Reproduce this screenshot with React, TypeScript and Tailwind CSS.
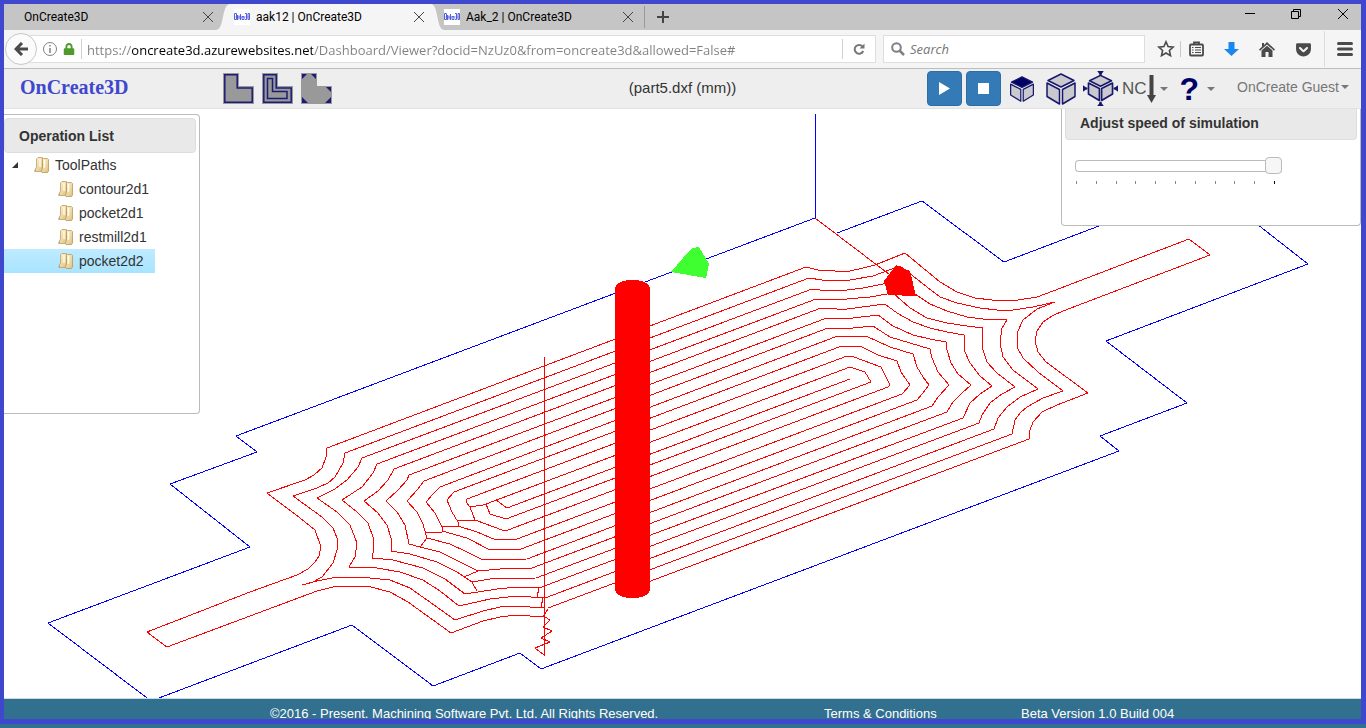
import type { ReactNode } from "react";
import { FaGetPocket, FaLock } from "react-icons/fa";

const operations = ["contour2d1", "pocket2d1", "restmill2d1", "pocket2d2"];

const stock =
  "815,218 236,436 257,452 170,484 250,547 48,623 151,701 352,625 433,686 520,653 541,669 1119,451 1100,436 1187,403 1106,341 1308,264 1207,185 1004,262 922,201 837,233";

// One entry per pass of the pocket, from the wall towards the centre.
const passes = [
  "632,588 1029,439 1030,430 1033,422 1042,412 1057,405 1088,393 1046,362 1038,352 1035,341 1037,331 1043,322 1052,316 1063,311 1210,255 1189,239 1053,291 1037,297 1018,300 992,300 975,298 957,292 940,282 905,253 875,265 863,268 850,271 835,271 818,270 806,267 327,448 326,457 322,468 314,475 305,480 267,493 300,518 315,530 321,547 319,556 315,562 308,569 297,575 250,592 147,632 167,647 250,616 317,591 333,587 350,586 367,586 390,592 408,602 451,633 483,621 500,617 517,615 530,616 544,617",
  "548,608 1012,434 1015,420 1020,413 1027,407 1043,398 1063,391 1038,372 1023,358 1017,347 1017,333 1023,320 1037,309 1055,302 1033,307 1013,310 997,310 980,308 957,303 940,297 927,287 913,276 900,266 873,276 850,280 822,280 809,278 345,453 343,463 335,477 328,483 317,488 293,496 322,517 333,528 337,538 338,547 333,563 322,577 313,582 302,585 317,581 337,577 360,577 390,580 410,588 427,600 455,620 483,611 500,607 517,606 530,607 544,608",
  "545,598 994,429 998,418 1007,407 1020,397 1038,389 1013,370 1003,357 1000,343 1002,328 1007,320 983,319 967,317 947,311 930,304 915,294 898,280 883,284 863,288 847,290 820,290 812,289 362,458 358,467 347,480 335,489 317,498 337,512 350,525 357,543 355,557 349,567 377,568 400,572 423,580 440,591 459,606 490,599 517,596 545,598",
  "539,588 979,423 982,415 990,403 1002,394 1015,387 997,373 987,362 983,350 982,337 983,328 967,326 947,323 927,318 910,308 893,293 870,297 847,299 816,299 377,464 373,473 362,487 342,500 357,512 368,523 373,537 374,548 372,558 393,560 423,568 445,579 465,594 497,589 517,587 539,588",
  "536,578 963,418 970,403 980,394 992,386 980,376 970,363 965,352 964,335 947,332 930,328 913,322 897,313 885,304 847,309 837,309 821,308 394,469 388,480 378,491 364,501 378,513 387,525 391,538 391,551 410,554 437,562 457,572 472,582 490,579 536,578",
  "532,568 947,412 953,402 962,393 971,385 958,374 951,363 947,350 946,342 930,339 913,335 893,326 878,315 853,318 824,319 409,475 407,480 398,490 386,501 397,512 405,525 409,544 420,547 440,552 460,562 478,571 500,569 532,568",
  "527,559 932,406 938,397 949,385 938,372 932,358 930,349 910,343 890,337 873,326 853,328 828,328 424,481 418,489 407,501 417,512 423,524 427,538 450,544 467,552 483,560 527,559",
  "521,549 917,400 922,394 929,385 923,377 917,367 913,354 890,347 866,336 835,337 440,487 433,494 426,502 435,513 442,527 442,531 467,538 490,550 521,549",
  "517,539 902,394 910,385 901,372 897,361 878,355 860,346 839,347 454,492 447,500 452,512 458,522 458,526 477,532 496,540 517,539",
  "508,530 888,387 890,385 881,367 854,357 847,356 467,499 466,502 470,507 475,520 502,530 508,530",
  "506,519 871,382 865,372 850,367 486,504 490,514 506,519",
  "850,379 507,508 496,500",
];

// Short moves between neighbouring passes, then the ramp down to the start point.
const links = [
  "470,507 483,505 486,504",
  "458,521 475,520",
  "442,527 458,526",
  "426,533 442,532",
  "427,538 420,547",
  "464,577 478,571",
  "472,582 477,591",
  "539,588 537,597",
  "543,598 541,607",
  "548,609 543,617",
  "545,617 550,620 543,627 552,631 541,638 550,642 535,648 544,655 544,357",
];

const cubes = {
  fill: "#c9c9cf",
  stroke: "#17176b",
};

function Viewport() {
  return (
    <svg
      className="absolute inset-0 h-full w-full"
      viewBox="4 109 1357 589"
      preserveAspectRatio="xMinYMin slice"
      shapeRendering="crispEdges"
      fill="none"
      aria-label="Toolpath view"
    >
      <polyline points={stock} stroke="#0000ff" />
      <path d="M815 114V218" stroke="#0000ff" />
      <path d="M815 218L890 275" stroke="#ff0000" />
      {passes.map((points) => (
        <polyline key={points} points={points} stroke="#ff0000" />
      ))}
      {links.map((points) => (
        <polyline key={points} points={points} stroke="#ff0000" />
      ))}
      <path d="M671 272L689 251L692 248L699 247L709 264L706 278Z" fill="#40ff30" />
      <path d="M896 265L910 271L916 296L888 295L884 281Z" fill="#ff0000" />
      <path d="M615 288C617 277 648 277 650 288V590C648 601 617 601 615 590Z" fill="#ff0000" />
    </svg>
  );
}

function Favicon() {
  return (
    <svg width="16" height="16" viewBox="0 0 16 16" className="shrink-0" aria-hidden="true">
      <rect width="16" height="16" fill="#fff" />
      <g fill="none" stroke="#5560d8" strokeWidth="1">
        <path d="M0.500 4.500h2v6h-2zM3.500 6v5M5 6.500v4M6.500 5v6M8 7.500h2v3H8zM11 4.500h1.500v6H11M14 4.500h1.500v6H14z" />
        <path d="M0 8h16" opacity="0.500" />
      </g>
    </svg>
  );
}

function CloseIcon({ size = 12 }: { size?: number }) {
  return (
    <svg width={size} height={size} viewBox="0 0 12 12" stroke="currentColor" aria-hidden="true">
      <path d="M1 1L11 11M11 1L1 11" />
    </svg>
  );
}

function Caret() {
  return (
    <svg width="8" height="4" viewBox="0 0 8 4" fill="#777" aria-hidden="true">
      <path d="M0 0H8L4 4Z" />
    </svg>
  );
}

function TabStrip() {
  return (
    <div className="flex h-[26px] bg-[#c5c5c5] font-['Roboto',sans-serif] text-xs text-black">
      <div className="flex w-[212px] items-center justify-between pr-0.5 pl-5">
        <span>OnCreate3D</span>
        <button aria-label="Close OnCreate3D" className="text-[#444]">
          <CloseIcon />
        </button>
      </div>
      <svg width="14" height="26" viewBox="0 0 14 26" fill="#f5f5f5" aria-hidden="true">
        <path d="M0 26C9 25 5 1 14 0V26Z" />
      </svg>
      <div className="flex w-[201px] items-center bg-[#f5f5f5] pr-1.5 pl-1">
        <Favicon />
        <span className="ml-1.5 flex-1">aak12 | OnCreate3D</span>
        <button aria-label="Close aak12" className="text-[#444]">
          <CloseIcon />
        </button>
      </div>
      <svg width="13" height="26" viewBox="0 0 13 26" fill="#f5f5f5" aria-hidden="true">
        <path d="M0 0C8 1 5 25 13 26H0Z" />
      </svg>
      <div className="flex w-[190px] items-center">
        <Favicon />
        <span className="ml-1.5 flex-1">Aak_2 | OnCreate3D</span>
        <button aria-label="Close Aak_2" className="text-[#444]">
          <CloseIcon />
        </button>
      </div>
      <div className="my-0.5 ml-2.5 w-px bg-[#999]" />
      <button aria-label="New tab" className="ml-3 text-[#444]">
        <svg width="12" height="12" viewBox="0 0 12 12" stroke="currentColor" strokeWidth="2" aria-hidden="true">
          <path d="M6 0V12M0 6H12" />
        </svg>
      </button>
      <div className="ml-auto flex items-start gap-9 pt-1 pr-3">
        <button aria-label="Minimize">
          <svg width="10" height="12" viewBox="0 0 10 12" stroke="#000" aria-hidden="true">
            <path d="M0 5.500H10" />
          </svg>
        </button>
        <button aria-label="Restore">
          <svg width="10" height="12" viewBox="0 0 10 12" fill="none" stroke="#000" aria-hidden="true">
            <path d="M0.500 3.500H7.500V10.500H0.500ZM2.500 3.500V1.500H9.500V8.500H7.500" />
          </svg>
        </button>
        <button aria-label="Close window">
          <CloseIcon />
        </button>
      </div>
    </div>
  );
}

function AddressBar() {
  return (
    <div className="flex h-[39px] items-center border-b border-[#bdbdbd] bg-[#f5f5f5] pr-2 pl-px font-['Open_Sans',sans-serif] text-[#4a4a4a]">
      <button
        aria-label="Back"
        className="z-10 flex size-8 shrink-0 items-center justify-center rounded-full border border-[#c8c8c8] bg-[#fbfbfb]"
      >
        <svg width="15" height="14" viewBox="0 0 15 14" fill="none" stroke="currentColor" strokeWidth="3" aria-hidden="true">
          <path d="M8 1L2 7L8 13M2.500 7H14" />
        </svg>
      </button>
      <div className="-ml-4 flex h-7 min-w-0 flex-1 items-center border border-[#dedede] bg-white pl-[21px]">
        <svg width="14" height="14" viewBox="0 0 14 14" fill="none" stroke="#808080" className="shrink-0" aria-hidden="true">
          <circle cx="7" cy="7" r="6.500" />
          <path d="M7 6V11M7 3V4.500" strokeWidth="1.500" />
        </svg>
        <FaLock size={12} className="ml-1.5 shrink-0 text-[#4e9a2a]" />
        <div className="ml-1.5 h-5 w-px bg-[#d0d0d0]" />
        <input
          aria-label="Address"
          defaultValue="https://oncreate3d.azurewebsites.net/Dashboard/Viewer?docid=NzUz0&from=oncreate3d&allowed=False#"
          className="ml-[5px] h-full min-w-0 flex-1 bg-[linear-gradient(90deg,#808080_45px,#000_45px,#000_226px,#808080_226px)] bg-clip-text pt-0.5 text-[13px] text-transparent outline-none"
        />
        <div className="h-5 w-px bg-[#d0d0d0]" />
        <button aria-label="Reload" className="flex w-8 justify-center text-[#777]">
          <svg width="12" height="12" viewBox="0 0 12 12" aria-hidden="true">
            <path d="M9.500 3.500A4.400 4.400 0 1 0 10.200 8" fill="none" stroke="currentColor" strokeWidth="2" />
            <path d="M11.500 0.500V5.500H6.500Z" fill="currentColor" />
          </svg>
        </button>
      </div>
      <div className="ml-[7px] flex h-7 w-[262px] items-center border border-[#dedede] bg-white pl-[7px]">
        <svg width="14" height="14" viewBox="0 0 14 14" fill="none" stroke="#808080" strokeWidth="2" className="shrink-0" aria-hidden="true">
          <circle cx="5.500" cy="5.500" r="4.300" />
          <path d="M8.500 8.500L13 13" strokeWidth="2.500" />
        </svg>
        <input
          aria-label="Search"
          placeholder="Search"
          className="ml-[5px] w-full pt-0.5 text-[13px] outline-none placeholder:text-[#757575] placeholder:italic"
        />
      </div>
      <button aria-label="Bookmark this page" className="ml-3">
        <svg width="18" height="18" viewBox="0 0 18 18" fill="none" stroke="currentColor" strokeWidth="1.600" aria-hidden="true">
          <path d="M9 1.800L11.100 6.600L16.200 7.100L12.400 10.500L13.500 15.700L9 13L4.500 15.700L5.600 10.500L1.800 7.100L6.900 6.600Z" />
        </svg>
      </button>
      <div className="ml-[5px] h-4 w-px bg-[#c8c8c8]" />
      <button aria-label="Bookmarks" className="ml-2">
        <svg width="15" height="16" viewBox="0 0 15 16" fill="none" stroke="currentColor" aria-hidden="true">
          <path d="M1 4.500Q1 3.500 2 3.500H13Q14 3.500 14 4.500V13.500Q14 14.500 13 14.500H2Q1 14.500 1 13.500Z" strokeWidth="1.800" />
          <path d="M5 3.500V1.500H10V3.500" strokeWidth="1.800" />
          <path d="M3 6.500H4.500M6 6.500H12M3 9H4.500M6 9H12M3 11.500H4.500M6 11.500H12" strokeWidth="1.200" />
        </svg>
      </button>
      <button aria-label="Downloads" className="ml-5 text-[#1a86f0]">
        <svg width="15" height="14" viewBox="0 0 15 14" fill="currentColor" aria-hidden="true">
          <path d="M4.500 0H10.500V7H15L7.500 14L0 7H4.500Z" />
        </svg>
      </button>
      <button aria-label="Home" className="ml-5">
        <svg width="16" height="15" viewBox="0 0 16 15" fill="currentColor" aria-hidden="true">
          <path d="M8 0L16 7.500L15 8.700L8 2.400L1 8.700L0 7.500L3 4.700V1H5V3Z" />
          <path d="M8 3.700L13.500 8.500V15H9.500V10H6.500V15H2.500V8.500Z" />
        </svg>
      </button>
      <button aria-label="Pocket" className="ml-5">
        <FaGetPocket size={17} />
      </button>
      <div className="ml-3 h-9 w-px bg-[#dcdcdc]" />
      <button aria-label="Menu" className="ml-3">
        <svg width="16" height="14" viewBox="0 0 16 14" stroke="currentColor" strokeWidth="3" strokeLinecap="round" aria-hidden="true">
          <path d="M1.500 1.500H14.500M1.500 7H14.500M1.500 12.500H14.500" />
        </svg>
      </button>
    </div>
  );
}

function PartIcon({ children }: { children?: ReactNode }) {
  return (
    <svg width="31" height="31" viewBox="0 0 31 31" fill="none" stroke="#1c1c78" strokeWidth="1.500" aria-hidden="true">
      <path d="M0 0H16V13H31V31H0Z" fill="#999" stroke="none" />
      {children}
    </svg>
  );
}

function Cube({ size, top = cubes.fill, arrows = false }: { size: number; top?: string; arrows?: boolean }) {
  return (
    <svg width={size} height={size} viewBox="0 0 32 32" strokeLinejoin="round" strokeWidth="1.500" fill={cubes.fill} stroke={cubes.stroke} aria-hidden="true">
      {arrows ? (
        <>
          <path d="M16 4L26 9L16 14L6 9Z" />
          <path d="M5 11L15 16V27L5 21Z" />
          <path d="M27 11L17 16V27L27 21Z" />
          <path d="M16 0V4M16 28V32M0 16H4M28 16H32" strokeWidth="2" />
          <path d="M13 0H19L16 4ZM13 32H19L16 28ZM0 13V19L4 16ZM32 13V19L28 16Z" fill={cubes.stroke} stroke="none" />
        </>
      ) : (
        <>
          <path d="M16 1L29 7.500L16 14L3 7.500Z" fill={top} />
          <path d="M2 10L14.500 16.500V31L2 23.500Z" />
          <path d="M30 10L17.500 16.500V31L30 23.500Z" />
        </>
      )}
    </svg>
  );
}

function AppHeader() {
  return (
    <header className="grid h-10 shrink-0 grid-cols-[1fr_auto_1fr] items-center border-b border-[#e2e2e2] bg-[#eee]">
      <div className="flex items-center pl-4">
        <a href="#" className="w-[203px] pb-1 font-['Liberation_Serif',serif] text-xl font-bold text-[#3f48cc]">
          OnCreate3D
        </a>
        <div className="flex gap-2">
          <button aria-label="Contour">
            <PartIcon>
              <path d="M1.800 1.800H14.200V15H29.200V29.200H1.800Z" />
            </PartIcon>
          </button>
          <button aria-label="Pocket milling">
            <PartIcon>
              <path d="M1.800 1.800H14.200V15H29.200V29.200H1.800Z" />
              <path d="M5.500 5.500H10.500V18.500H25V25.500H5.500Z" />
            </PartIcon>
          </button>
          <button aria-label="Rest milling">
            <PartIcon>
              <path
                d="M1 1H6L1 6ZM15 1H10L15 6ZM30 14V19L25 14ZM1 30V24L7 30ZM30 30V24L24 30Z"
                fill="#1c1c78"
                stroke="none"
              />
            </PartIcon>
          </button>
        </div>
      </div>
      <h1 className="text-[15px] text-[#333]">(part5.dxf (mm))</h1>
      <div className="flex items-center justify-end pr-3">
        <div className="flex gap-1">
          <button
            aria-label="Play"
            className="flex size-[35px] items-center justify-center rounded border border-[#2e6da4] bg-[#337ab7]"
          >
            <svg width="11" height="13" viewBox="0 0 11 13" fill="#fff" aria-hidden="true">
              <path d="M0 0L11 6.500L0 13Z" />
            </svg>
          </button>
          <button
            aria-label="Stop"
            className="flex size-[35px] items-center justify-center rounded border border-[#2e6da4] bg-[#337ab7]"
          >
            <span className="size-[11px] bg-white" />
          </button>
        </div>
        <button aria-label="Top view" className="ml-2">
          <Cube size={26} top="#000066" />
        </button>
        <button aria-label="Isometric view" className="ml-2.5">
          <Cube size={32} />
        </button>
        <button aria-label="Fit view" className="ml-1.5">
          <Cube size={35} arrows />
        </button>
        <button aria-label="Export NC" className="ml-1 flex items-center text-[17px] text-[#555]">
          NC
          <svg width="9" height="28" viewBox="0 0 9 28" fill="#444" aria-hidden="true">
            <path d="M2.500 0H6.500V20H9L4.500 28L0 20H2.500Z" />
          </svg>
          <span className="ml-1">
            <Caret />
          </span>
        </button>
        <button aria-label="Help" className="ml-3 flex items-center">
          <span className="text-[32px] leading-8 font-bold text-[#000066]">?</span>
          <span className="ml-2">
            <Caret />
          </span>
        </button>
        <button className="ml-[22px] flex items-center gap-0.5 pb-1 text-sm text-[#777]">
          OnCreate Guest
          <Caret />
        </button>
      </div>
    </header>
  );
}

function Folder() {
  return (
    <svg width="16" height="16" viewBox="0 0 16 16" className="shrink-0" aria-hidden="true">
      <defs>
        <linearGradient id="folder" x1="0" y1="0" x2="1" y2="1">
          <stop offset="0" stopColor="#fff6d8" />
          <stop offset="1" stopColor="#dfc07c" />
        </linearGradient>
      </defs>
      <path d="M0 14L2 11V15H1Z" fill="#aaa" />
      <path d="M2.500 2L4 0.500H8.500V13L7 14.500H1.500V12L2.500 10Z" fill="url(#folder)" stroke="#bfa060" strokeWidth="0.800" />
      <path d="M8.500 2.500L9.500 1.500H13.500L14.500 2.500V14L13.500 15.500H8L7.500 14L8.500 11Z" fill="url(#folder)" stroke="#b8985a" strokeWidth="0.800" />
      <path d="M6 2V10M10.500 3V11" stroke="#fffbe8" strokeWidth="1.500" />
    </svg>
  );
}

function OperationList() {
  return (
    <section className="mt-[5px] h-[300px] w-[196px] rounded-r border border-l-0 border-[#bbb] bg-white pt-[3px] pr-[3px]">
      <h2 className="flex h-[35px] items-center rounded border border-[#ddd] bg-[#e9e9e9] pl-3.5 text-sm font-bold text-[#333]">
        Operation List
      </h2>
      <ul className="text-sm text-[#333]">
        <li>
          <div className="flex h-6 items-center pl-2">
            <svg width="6" height="6" viewBox="0 0 6 6" aria-hidden="true">
              <path d="M6 0V6H0Z" fill="#333" />
            </svg>
            <span className="ml-4 flex items-center gap-[5px]">
              <Folder />
              ToolPaths
            </span>
          </div>
          <ul>
            {operations.map((name) => (
              <li
                key={name}
                className={
                  name === "pocket2d2"
                    ? "flex h-6 w-[151px] items-center gap-[5px] bg-linear-to-b from-[#beebff] to-[#a8e4ff] pl-[54px]"
                    : "flex h-6 w-[151px] items-center gap-[5px] pl-[54px]"
                }
              >
                <Folder />
                {name}
              </li>
            ))}
          </ul>
        </li>
      </ul>
    </section>
  );
}

function SpeedPanel() {
  return (
    <section className="h-[117px] w-[300px] rounded-b border border-t-0 border-[#bbb] bg-white px-[3px]">
      <h2 className="rounded-b border border-t-0 border-[#ddd] bg-[#e9e9e9] pt-1 pb-1.5 pl-3.5 text-sm font-bold text-[#333]">
        <label htmlFor="speed">Adjust speed of simulation</label>
      </h2>
      <div className="px-2.5 pt-[17px]">
        <input
          id="speed"
          type="range"
          defaultValue={100}
          className="block h-[17px] w-[207px] appearance-none bg-transparent [&::-webkit-slider-runnable-track]:h-3 [&::-webkit-slider-runnable-track]:rounded-l [&::-webkit-slider-runnable-track]:border [&::-webkit-slider-runnable-track]:border-r-0 [&::-webkit-slider-runnable-track]:border-[#bbb] [&::-webkit-slider-thumb]:-mt-1 [&::-webkit-slider-thumb]:size-[17px] [&::-webkit-slider-thumb]:appearance-none [&::-webkit-slider-thumb]:rounded [&::-webkit-slider-thumb]:border [&::-webkit-slider-thumb]:border-[#bbb] [&::-webkit-slider-thumb]:bg-[#f6f6f6]"
        />
        <div className="mt-[7px] flex w-[200px] justify-between pl-px">
          {Array.from({ length: 11 }, (_, i) => (
            <span key={i} className="h-[3px] w-px bg-[#888] last:bg-black" />
          ))}
        </div>
      </div>
    </section>
  );
}

export default function App() {
  return (
    <div className="flex h-screen flex-col bg-[#31708f] pb-1 font-['Liberation_Sans',sans-serif]">
      <div className="flex min-h-0 flex-1 flex-col border-4 border-r-5 border-b-5 border-[#3f48cc] bg-white">
        <TabStrip />
        <AddressBar />
        <AppHeader />
        <main className="relative min-h-0 flex-1 overflow-hidden">
          <Viewport />
          <div className="relative flex items-start justify-between">
            <OperationList />
            <SpeedPanel />
          </div>
        </main>
        <footer className="grid h-[21px] shrink-0 grid-cols-[820fr_197fr_340fr] overflow-hidden border-t border-[#c8dce6] bg-[#31708f] pt-[7px] text-[13px] leading-4 whitespace-nowrap text-white">
          <span className="pl-[266px]">©2016 - Present. Machining Software Pvt. Ltd. All Rights Reserved.</span>
          <a href="#">Terms &amp; Conditions</a>
          <span>Beta Version 1.0 Build 004</span>
        </footer>
      </div>
    </div>
  );
}
